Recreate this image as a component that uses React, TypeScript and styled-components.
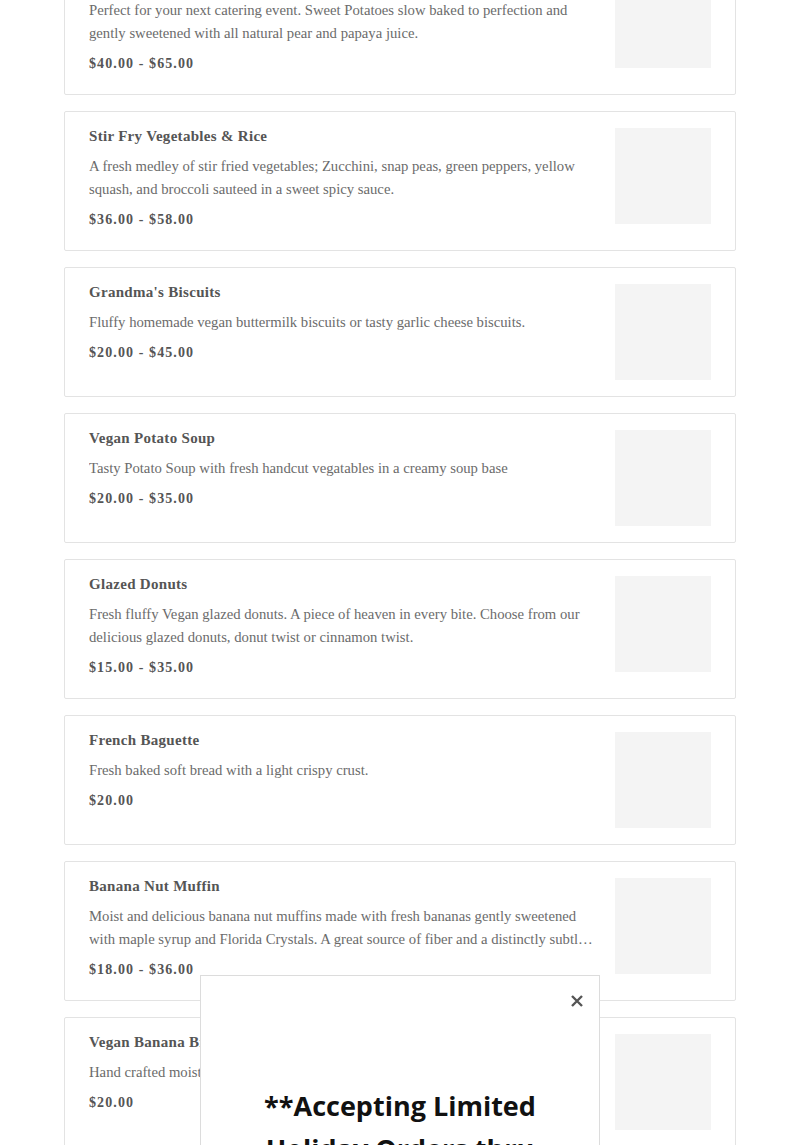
import React from "react";
import styled, { createGlobalStyle } from "styled-components";

const Global = createGlobalStyle`
  html, body { margin: 0; padding: 0; background: #fff; overflow: hidden; }
  body { width: 800px; height: 1145px; }
`;

const Page = styled.div`
  position: relative;
  width: 800px;
  height: 1145px;
  overflow: hidden;
`;

const List = styled.div`
  display: flex;
  flex-direction: column;
  gap: 16px;
  margin: -45px 64px 0;
`;

const Card = styled.div`
  display: flex;
  justify-content: space-between;
  gap: 16px;
  border: 1px solid #e3e3e3;
  border-radius: 2px;
  padding: 16px 24px;
  background: #fff;
`;

const Info = styled.div`
  flex: 1;
  min-width: 0;
  padding-bottom: 4px;
`;

const Title = styled.div`
  font-family: "Liberation Serif", "DejaVu Serif", serif;
  font-weight: 700;
  font-size: 15px;
  line-height: 16px;
  letter-spacing: 0.3px;
  color: #555;
`;

const Desc = styled.div`
  margin-top: 11px;
  font-family: "Liberation Serif", "DejaVu Serif", serif;
  font-size: 14.7px;
  line-height: 23px;
  color: #6b6b6b;
  display: -webkit-box;
  -webkit-line-clamp: 2;
  -webkit-box-orient: vertical;
  overflow: hidden;
`;

const Price = styled.div`
  margin-top: 9px;
  font-family: "Liberation Serif", "DejaVu Serif", serif;
  font-weight: 700;
  font-size: 14px;
  line-height: 20px;
  letter-spacing: 1.1px;
  color: #555;
`;

const Thumb = styled.div`
  flex: none;
  width: 96px;
  height: 96px;
  background: #f4f4f4;
`;

const Modal = styled.div`
  position: absolute;
  left: 200px;
  top: 975px;
  width: 400px;
  height: 400px;
  box-sizing: border-box;
  border: 1px solid #dcdcdc;
  background: #fff;
  padding: 108px 30px 0;
`;

const Close = styled.button`
  position: absolute;
  top: 15px;
  right: 12px;
  width: 20px;
  height: 20px;
  padding: 0;
  border: 0;
  background: none;
  display: flex;
  align-items: center;
  justify-content: center;
  cursor: pointer;
`;

const Heading = styled.div`
  font-family: "Open Sans", "Noto Sans", sans-serif;
  font-weight: 700;
  font-size: 27px;
  line-height: 43px;
  color: #111;
  text-align: center;
`;

type Item = { title: string; desc: string; price: string };

const items: Item[] = [
  {
    title: "Sweet Potato Casserole",
    desc: "Perfect for your next catering event. Sweet Potatoes slow baked to perfection and gently sweetened with all natural pear and papaya juice.",
    price: "$40.00 - $65.00",
  },
  {
    title: "Stir Fry Vegetables & Rice",
    desc: "A fresh medley of stir fried vegetables; Zucchini, snap peas, green peppers, yellow squash, and broccoli sauteed in a sweet spicy sauce.",
    price: "$36.00 - $58.00",
  },
  {
    title: "Grandma's Biscuits",
    desc: "Fluffy homemade vegan buttermilk biscuits or tasty garlic cheese biscuits.",
    price: "$20.00 - $45.00",
  },
  {
    title: "Vegan Potato Soup",
    desc: "Tasty Potato Soup with fresh handcut vegatables in a creamy soup base",
    price: "$20.00 - $35.00",
  },
  {
    title: "Glazed Donuts",
    desc: "Fresh fluffy Vegan glazed donuts. A piece of heaven in every bite. Choose from our delicious glazed donuts, donut twist or cinnamon twist.",
    price: "$15.00 - $35.00",
  },
  {
    title: "French Baguette",
    desc: "Fresh baked soft bread with a light crispy crust.",
    price: "$20.00",
  },
  {
    title: "Banana Nut Muffin",
    desc: "Moist and delicious banana nut muffins made with fresh bananas gently sweetened with maple syrup and Florida Crystals. A great source of fiber and a distinctly subtle banana flavor.",
    price: "$18.00 - $36.00",
  },
  {
    title: "Vegan Banana Bread",
    desc: "Hand crafted moist banana bread.",
    price: "$20.00",
  },
];

export default function App() {
  return (
    <Page>
      <Global />
      <List>
        {items.map((it) => (
          <Card key={it.title}>
            <Info>
              <Title>{it.title}</Title>
              <Desc>{it.desc}</Desc>
              <Price>{it.price}</Price>
            </Info>
            <Thumb />
          </Card>
        ))}
      </List>
      <Modal>
        <Close aria-label="Close">
          <svg width="14" height="14" viewBox="0 0 14 14">
            <path d="M2 2 L12 12 M12 2 L2 12" stroke="#555" strokeWidth="2.4" strokeLinecap="butt" />
          </svg>
        </Close>
        <Heading>**Accepting Limited Holiday Orders thru December</Heading>
      </Modal>
    </Page>
  );
}
